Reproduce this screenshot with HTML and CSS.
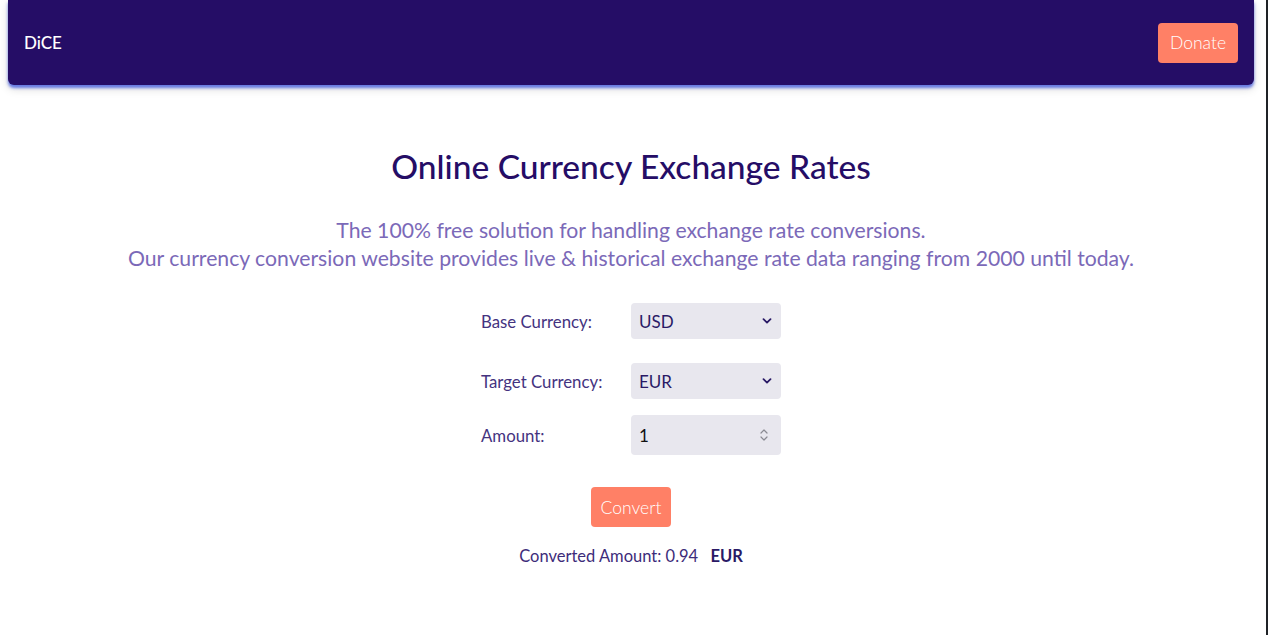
FILE: index.html
```html
<!DOCTYPE html>
<html lang="en">
<head>
<meta charset="utf-8">
<title>DiCE</title>
<link rel="stylesheet" href="styles.css">
</head>
<body>
<nav class="navbar">
  <span class="brand">DiCE</span>
  <button class="btn donate">Donate</button>
</nav>
<main class="main">
  <h1 class="title">Online Currency Exchange Rates</h1>
  <p class="subtitle">The 100% free solution for handling exchange rate conversions.<br>Our currency conversion website provides live &amp; historical exchange rate data ranging from 2000 until today.</p>
  <form class="form">
    <div class="row row-base">
      <label class="label">Base Currency:</label>
      <div class="field">
        <select class="control"><option>USD</option></select>
        <svg class="chev" width="10" height="6" viewBox="0 0 10 6"><path d="M1.5 1.2 L5 4.6 L8.5 1.2" fill="none" stroke="#2a1a66" stroke-width="1.8" stroke-linecap="round" stroke-linejoin="round"/></svg>
      </div>
    </div>
    <div class="row row-target">
      <label class="label">Target Currency:</label>
      <div class="field">
        <select class="control"><option>EUR</option></select>
        <svg class="chev" width="10" height="6" viewBox="0 0 10 6"><path d="M1.5 1.2 L5 4.6 L8.5 1.2" fill="none" stroke="#2a1a66" stroke-width="1.8" stroke-linecap="round" stroke-linejoin="round"/></svg>
      </div>
    </div>
    <div class="row row-amount">
      <label class="label">Amount:</label>
      <div class="field">
        <input class="control num" type="text" value="1">
        <svg class="spin" width="10" height="14" viewBox="0 0 10 14"><path d="M2 5 L5 2 L8 5 M2 9 L5 12 L8 9" fill="none" stroke="#8a8a92" stroke-width="1.2" stroke-linecap="round" stroke-linejoin="round"/></svg>
      </div>
    </div>
    <button type="button" class="btn convert">Convert</button>
    <p class="result">Converted Amount: 0.94 <strong class="cur">EUR</strong></p>
  </form>
</main>
</body>
</html>
```
FILE: styles.css
```css
html {
  background: #fff;
  overflow: hidden;
}
body {
  margin: 0;
  padding: 0 12px 0 8px;
  border-right: 2px solid #1f2226;
  height: 635px;
  box-sizing: border-box;
  font-family: Lato, "Noto Sans", sans-serif;
}
.navbar {
  height: 85px;
  background: #250d66;
  border-radius: 0 0 6px 6px;
  box-shadow: 0 3px 3px rgba(70, 95, 225, 0.8), 0 4px 10px rgba(0, 0, 0, 0.15);
  display: flex;
  align-items: center;
  justify-content: space-between;
  padding: 0 16px;
}
.brand {
  color: #fff;
  font-size: 17px;
  font-weight: 500;
}
.btn {
  background: #ff8066;
  color: #fff;
  border: none;
  border-radius: 4px;
  font-family: inherit;
  font-size: 17.5px;
  font-weight: 300;
  height: 40px;
  width: 80px;
  padding: 0;
}
.main {
  display: flex;
  flex-direction: column;
  align-items: center;
}
.title {
  margin: 62px 0 0;
  color: #250d66;
  font-size: 33.5px;
  font-weight: 500;
  line-height: 38px;
}
.subtitle {
  margin: 31px 0 0;
  text-align: center;
  color: #7b69b8;
  font-size: 21.2px;
  font-weight: 400;
  line-height: 28px;
}
.form {
  margin-top: 31px;
  display: flex;
  flex-direction: column;
  align-items: center;
}
.row {
  display: flex;
  align-items: center;
  width: 300px;
}
.row-target { margin-top: 24px; }
.row-amount { margin-top: 16px; }
.label {
  width: 150px;
  color: #44337f;
  font-size: 16.8px;
}
.field {
  position: relative;
  width: 150px;
}
.control {
  appearance: none;
  -webkit-appearance: none;
  box-sizing: border-box;
  width: 150px;
  height: 36px;
  border: none;
  border-radius: 4px;
  background: #e8e7ee;
  font-family: inherit;
  font-size: 17px;
  color: #2a1a66;
  padding: 0 8px;
  display: block;
}
.num {
  height: 40px;
  color: #111;
}
.chev {
  position: absolute;
  right: 9px;
  top: 15px;
}
.spin {
  position: absolute;
  right: 12px;
  top: 13px;
}
.convert {
  margin-top: 32px;
}
.result {
  margin: 19px 0 0;
  color: #3d2c7a;
  font-size: 16.5px;
}
.cur {
  margin-left: 8px;
  font-weight: 700;
  color: #2a1a66;
}
```
